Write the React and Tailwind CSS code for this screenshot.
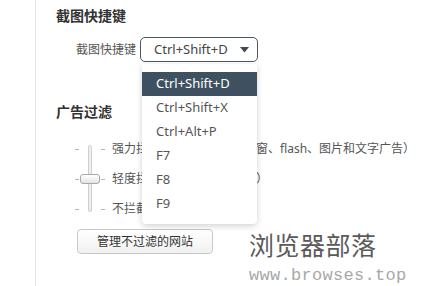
import React from 'react';

const shortcuts = ['Ctrl+Shift+D', 'Ctrl+Shift+X', 'Ctrl+Alt+P', 'F7', 'F8', 'F9'];

const filterLevels = [
  '强力拦截（拦截网页中的弹窗、flash、图片和文字广告）',
  '轻度拦截（仅拦截弹窗广告）',
  '不拦截广告',
];

function Slider() {
  return (
    <div className="relative w-[30px] h-[90px] shrink-0">
      <div className="flex flex-col h-full">
        {filterLevels.map((_, i) => (
          <div key={i} className="h-[30px] flex items-center justify-between">
            <span className="w-[4px] h-px bg-[#b5b5b5]" />
            <span className="w-[4px] h-px bg-[#b5b5b5]" />
          </div>
        ))}
      </div>
      <div className="absolute left-[13px] top-[11px] w-[4px] h-[67px] rounded-full border border-[#d0d0d0] bg-gradient-to-r from-[#e6e6e6] to-[#f7f7f7]" />
      <div className="absolute left-[5px] top-[40px] w-[20px] h-[10px] rounded-[3px] border border-[#a8a8a8] bg-gradient-to-b from-white to-[#e4e4e4]" />
    </div>
  );
}

export default function App() {
  return (
    <div className="relative w-[422px] h-[286px] overflow-hidden bg-white font-['Noto_Sans','Noto_Sans_CJK_SC',sans-serif]">
      <div className="ml-[35px] h-full border-l border-[#e3e7ea] pl-[20px] pt-[8px]">
        <h2 className="text-[14px] leading-[16px] font-bold text-[#333]">截图快捷键</h2>

        <div className="mt-[13px] ml-[20px] flex items-center gap-[4px]">
          <span className="w-[60px] text-[12px] text-[#555] whitespace-nowrap">截图快捷键</span>
          <div className="w-[118px] h-[25px] rounded-[5px] border border-[#4b5863] flex items-center justify-between pl-[13px] pr-[8px] text-[13px] text-[#444]">
            <span>Ctrl+Shift+D</span>
            <svg width="9" height="6" viewBox="0 0 9 6">
              <path d="M0 0h9L4.5 5.5z" fill="#3d4a55" />
            </svg>
          </div>
        </div>

        <h2 className="mt-[42px] text-[14px] leading-[16px] font-bold text-[#333]">广告过滤</h2>

        <div className="mt-[14px] ml-[19px] flex gap-[7px]">
          <Slider />
          <div className="flex flex-col">
            {filterLevels.map((label) => (
              <div key={label} className="h-[30px] flex items-center text-[12px] text-[#555] whitespace-nowrap">
                {label}
              </div>
            ))}
          </div>
        </div>

        <button className="mt-[5px] ml-[21px] w-[136px] h-[25px] rounded-[4px] border border-[#c9c9c9] bg-gradient-to-b from-white to-[#f1f1f1] text-[12px] text-[#333]">
          管理不过滤的网站
        </button>
      </div>

      <ul className="absolute left-[142px] top-[64px] w-[115px] py-[8px] bg-white rounded-b-[4px] shadow-[0_2px_6px_rgba(0,0,0,0.18)]">
        {shortcuts.map((key, i) => (
          <li
            key={key}
            className={`h-[24px] flex items-center px-[14px] text-[13px] ${i === 0 ? 'bg-[#3f5160] text-white' : 'text-[#555]'}`}
          >
            {key}
          </li>
        ))}
      </ul>

      <div className="absolute left-[249px] top-[229px]">
        <div className="text-[25px] leading-[30px] text-[#5a5a5a] font-['Noto_Sans_CJK_SC',sans-serif] tracking-[0.5px]">浏览器部落</div>
        <div className="mt-[7px] text-[17px] leading-[20px] tracking-[0.3px] text-[#a8a8a8] font-['Liberation_Mono',monospace]">www.browses.top</div>
      </div>
    </div>
  );
}
